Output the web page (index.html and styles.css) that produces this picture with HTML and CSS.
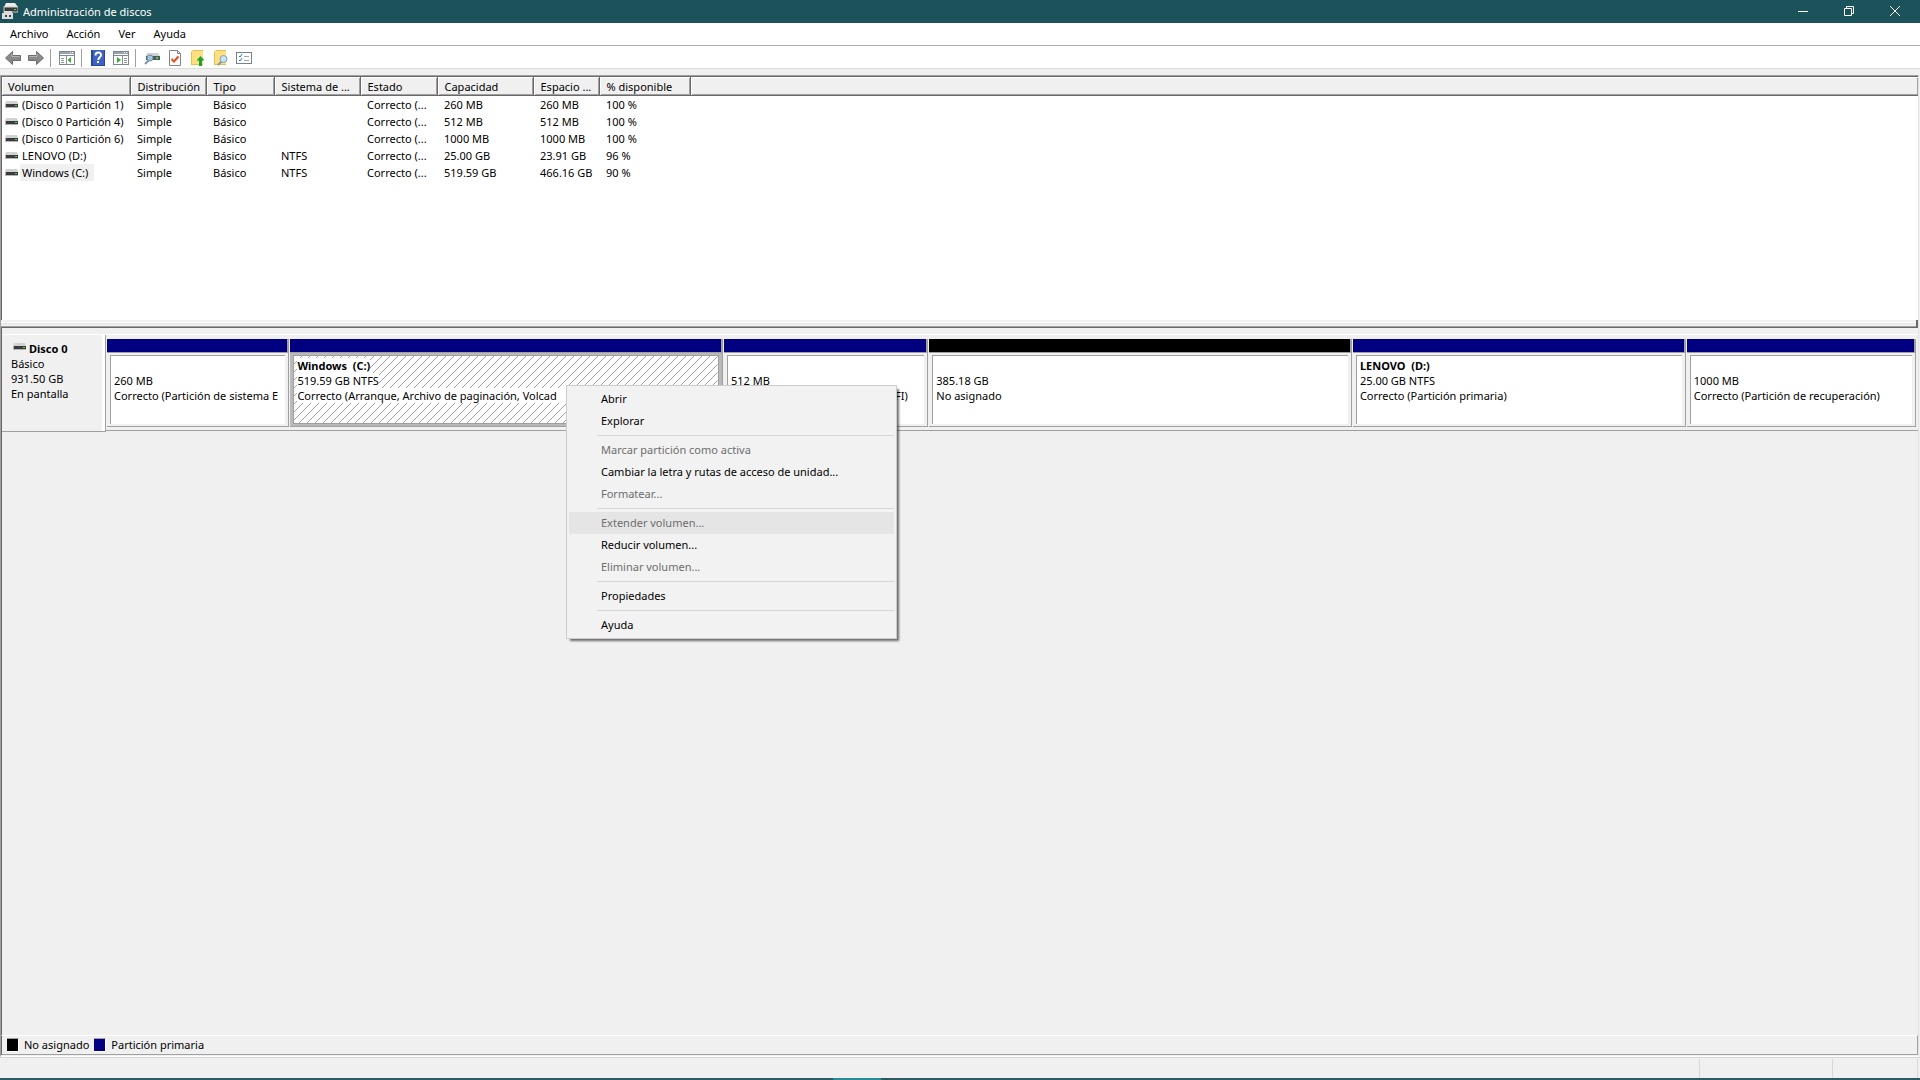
FILE: index.html
```html
<!DOCTYPE html>
<html lang="es">
<head>
<meta charset="utf-8">
<title>Administración de discos</title>
<link rel="stylesheet" href="styles.css">
</head>
<body>
<svg class="defs" width="0" height="0" aria-hidden="true">
  <defs>
    <symbol id="drive" viewBox="0 0 13 7">
      <path d="M1 0h11l1 3H0z" fill="#d2d2d6"/>
      <rect y="3" width="13" height="4" fill="#b4b4b8"/>
      <rect x="1" y="3" width="12" height="3" fill="#3c3c40"/>
      <rect x="10" y="4" width="2" height="1" fill="#3fe03f"/>
    </symbol>
    <symbol id="arrow" viewBox="0 0 16 14">
      <path d="M7.500.5v4h8v5h-8v4L.5 7z" fill="#8a8a8a" stroke="#6b6b6b"/>
      <path d="M7 2.500v3h7.500" fill="none" stroke="#b4b4b4"/>
    </symbol>
    <symbol id="panel" viewBox="0 0 16 14">
      <rect x=".5" y=".5" width="15" height="13" fill="#fff" stroke="#7e8791"/>
      <path d="M1 2h14" stroke="#9aa2ab" stroke-width="2"/>
      <path d="M11 1.500h1m1 0h1" stroke="#fff"/>
      <path d="M1 4.500h14" stroke="#7e8791"/>
    </symbol>
    <pattern id="hatch" width="8" height="8" patternUnits="userSpaceOnUse">
      <path d="M-1 9L9-1M-1 1L1-1M7 9L9 7" stroke="#a0a0a0" shape-rendering="crispEdges"/>
    </pattern>
  </defs>
</svg>
<div class="window">
  <header class="titlebar">
    <svg class="app-icon" width="16" height="16" viewBox="0 0 16 16" aria-hidden="true">
      <path d="M4 0h9l3 4H2z" fill="#ececec"/>
      <rect x="2" y="4" width="14" height="5" fill="#3a3a3c" stroke="#c8c8c8" stroke-width="1"/>
      <rect x="12" y="6" width="2" height="1" fill="#4be04b"/>
      <path d="M2 8h8v2h1v6H0v-6h2z" fill="#dcdcdc"/>
      <path d="M3 12h2v2H3zM7 12h2v2H7z" fill="#444"/>
    </svg>
    <h1>Administración de discos</h1>
    <div class="caption-buttons">
      <button type="button" aria-label="Minimizar"><svg width="10" height="10"><path d="M0 5.500h10" stroke="#fff"/></svg></button>
      <button type="button" aria-label="Restaurar"><svg width="10" height="10"><path d="M.5 2.500h7v7h-7zM2.500 2.500v-2h7v7h-2" fill="none" stroke="#fff"/></svg></button>
      <button type="button" aria-label="Cerrar"><svg width="10" height="10"><path d="M0 0l10 10M10 0L0 10" stroke="#fff"/></svg></button>
    </div>
  </header>

  <nav class="menubar">
    <button type="button">Archivo</button>
    <button type="button">Acción</button>
    <button type="button">Ver</button>
    <button type="button">Ayuda</button>
  </nav>

  <div class="toolbar" role="toolbar">
    <button type="button" aria-label="Atrás"><svg width="16" height="14"><use href="#arrow"/></svg></button>
    <button type="button" aria-label="Adelante"><svg class="flip" width="16" height="14"><use href="#arrow"/></svg></button>
    <span class="separator"></span>
    <button type="button" aria-label="Mostrar árbol"><svg width="16" height="14"><use href="#panel"/><path d="M7.500 5v8M2 7.500h3M2 9.500h3M2 11.500h3" stroke="#8b939b"/><path d="M12 6v6L8.500 9z" fill="#3aa832"/></svg></button>
    <span class="separator"></span>
    <button type="button" aria-label="Ayuda"><svg width="14" height="16" viewBox="0 0 14 16"><rect width="14" height="16" fill="#27469c"/><rect x="2" width="11" height="15" fill="#3f62c4"/><path d="M4.500 5.500C4.500 1.500 10 1.500 10 5c0 2.200-2.700 2.300-2.700 5" fill="none" stroke="#fff" stroke-width="2"/><rect x="6" y="11" width="2" height="2" fill="#fff"/></svg></button>
    <button type="button" aria-label="Panel de acciones"><svg width="16" height="14"><use href="#panel"/><path d="M9.500 5v8M11 7.500h3M11 9.500h3M11 11.500h3" stroke="#8b939b"/><path d="M4 6v6l4-3z" fill="#3aa832"/></svg></button>
    <span class="separator"></span>
    <button type="button" aria-label="Volver a examinar"><svg width="16" height="14" viewBox="0 0 16 14"><path d="M3 2h11l2 3H2z" fill="#d2d2d6"/><rect x="2" y="5" width="14" height="4" fill="#55555a"/><rect x="12" y="6" width="2" height="2" fill="#3fe03f"/><path d="M1 13l4-4" stroke="#7698b4" stroke-width="2"/><circle cx="6" cy="7" r="3" fill="#9cc8e4" stroke="#6b8ea8"/></svg></button>
    <button type="button" aria-label="Tareas"><svg width="12" height="16" viewBox="0 0 12 16"><path d="M.5.5h8l3 3v12H.5z" fill="#fafafa" stroke="#858585"/><path d="M8.500.5v3h3" fill="none" stroke="#858585"/><path d="M2.500 9l2.500 2.500 4.500-5" fill="none" stroke="#e0501e" stroke-width="2"/></svg></button>
    <button type="button" aria-label="Subir"><svg width="14" height="16" viewBox="0 0 14 16"><path d="M0 2l2-2h10v15H0z" fill="#e5bf50"/><path d="M1 1h11v13H1z" fill="#ffdf80"/><path d="M9.500 6l4 4.500h-2.500V16H8v-5.500H5.500z" fill="#19a52a"/></svg></button>
    <button type="button" aria-label="Buscar"><svg width="14" height="16" viewBox="0 0 14 16"><path d="M0 2l2-2h10v15H0z" fill="#e5bf50"/><path d="M1 1h11v13H1z" fill="#ffdf80"/><path d="M4 15l4-4" stroke="#7d98ab" stroke-width="2"/><circle cx="9.500" cy="9" r="3.500" fill="#c6e4f4" stroke="#84a0b0"/></svg></button>
    <button type="button" aria-label="Propiedades"><svg width="16" height="12" viewBox="0 0 16 12"><rect x=".5" y=".5" width="15" height="11" fill="#fff" stroke="#77818b"/><path d="M8 4.500h5M8 8.500h5" stroke="#a0a8b0"/><path d="M3 4l1 1 2-3M3 8l1 1 2-3" fill="none" stroke="#2f74c8"/></svg></button>
  </div>

  <main class="content">
    <section class="volumes">
      <table>
        <colgroup><col class="c-volume"><col class="c-layout"><col class="c-type"><col class="c-fs"><col class="c-state"><col class="c-capacity"><col class="c-free"><col class="c-percent"><col></colgroup>
        <thead><tr><th>Volumen</th><th>Distribución</th><th>Tipo</th><th>Sistema de ...</th><th>Estado</th><th>Capacidad</th><th>Espacio ...</th><th>% disponible</th><th></th></tr></thead>
        <tbody>
          <tr><td><svg width="13" height="7"><use href="#drive"/></svg><span>(Disco 0 Partición 1)</span></td><td>Simple</td><td>Básico</td><td></td><td>Correcto (...</td><td>260 MB</td><td>260 MB</td><td>100 %</td><td></td></tr>
          <tr><td><svg width="13" height="7"><use href="#drive"/></svg><span>(Disco 0 Partición 4)</span></td><td>Simple</td><td>Básico</td><td></td><td>Correcto (...</td><td>512 MB</td><td>512 MB</td><td>100 %</td><td></td></tr>
          <tr><td><svg width="13" height="7"><use href="#drive"/></svg><span>(Disco 0 Partición 6)</span></td><td>Simple</td><td>Básico</td><td></td><td>Correcto (...</td><td>1000 MB</td><td>1000 MB</td><td>100 %</td><td></td></tr>
          <tr><td><svg width="13" height="7"><use href="#drive"/></svg><span>LENOVO (D:)</span></td><td>Simple</td><td>Básico</td><td>NTFS</td><td>Correcto (...</td><td>25.00 GB</td><td>23.91 GB</td><td>96 %</td><td></td></tr>
          <tr><td><svg width="13" height="7"><use href="#drive"/></svg><span class="selected">Windows (C:)</span></td><td>Simple</td><td>Básico</td><td>NTFS</td><td>Correcto (...</td><td>519.59 GB</td><td>466.16 GB</td><td>90 %</td><td></td></tr>
        </tbody>
      </table>
    </section>
    <div class="splitter"></div>
    <section class="disks">
      <div class="disk">
        <div class="disk-label">
          <h2><svg width="13" height="7"><use href="#drive"/></svg>Disco 0</h2>
          <p>Básico</p>
          <p>931.50 GB</p>
          <p>En pantalla</p>
        </div>
        <div class="partitions">
          <article class="partition p-system"><div class="stripe"></div><div class="body"><div class="info"><h3></h3><p>260 MB</p><p>Correcto (Partición de sistema E</p></div></div></article>
          <article class="partition p-windows active"><div class="stripe"></div><div class="body"><div class="info"><svg class="hatch" aria-hidden="true"><rect width="100%" height="100%" fill="url(#hatch)"/></svg><h3><span>Windows&nbsp; (C:)</span></h3><p><span>519.59 GB NTFS</span></p><p><span class="long">Correcto (Arranque, Archivo de paginación, Volcad</span></p></div></div></article>
          <article class="partition p-efi"><div class="stripe"></div><div class="body"><div class="info"><h3></h3><p>512 MB</p><p>Correcto (Partición de sistema EFI)</p></div></div></article>
          <article class="partition p-free unallocated"><div class="stripe"></div><div class="body"><div class="info"><h3></h3><p>385.18 GB</p><p>No asignado</p></div></div></article>
          <article class="partition p-lenovo"><div class="stripe"></div><div class="body"><div class="info"><h3>LENOVO&nbsp; (D:)</h3><p>25.00 GB NTFS</p><p>Correcto (Partición primaria)</p></div></div></article>
          <article class="partition p-recovery"><div class="stripe"></div><div class="body"><div class="info"><h3></h3><p>1000 MB</p><p>Correcto (Partición de recuperación)</p></div></div></article>
        </div>
      </div>
      <div class="context-menu" role="menu">
        <button type="button" role="menuitem">Abrir</button>
        <button type="button" role="menuitem">Explorar</button>
        <hr>
        <button type="button" role="menuitem" disabled>Marcar partición como activa</button>
        <button type="button" role="menuitem">Cambiar la letra y rutas de acceso de unidad...</button>
        <button type="button" role="menuitem" disabled>Formatear...</button>
        <hr>
        <button type="button" role="menuitem" class="hover" disabled>Extender volumen...</button>
        <button type="button" role="menuitem">Reducir volumen...</button>
        <button type="button" role="menuitem" disabled>Eliminar volumen...</button>
        <hr>
        <button type="button" role="menuitem">Propiedades</button>
        <hr>
        <button type="button" role="menuitem">Ayuda</button>
      </div>
    </section>
    <footer class="legend">
      <span class="swatch black"></span><span>No asignado</span>
      <span class="swatch blue"></span><span>Partición primaria</span>
    </footer>
  </main>
  <div class="statusbar"><span></span><span></span><span></span></div>
  <div class="taskbar"></div>
</div>
</body>
</html>
```
FILE: styles.css
```css
* { box-sizing: border-box; }

body {
  margin: 0;
  background: #f0f0f0;
  color: #000;
  font: 11px/15px "Noto Sans", "Open Sans", sans-serif;
}

h1, h2, h3, p { margin: 0; font-size: inherit; }

button {
  border: 0;
  padding: 0;
  background: none;
  color: inherit;
  font: inherit;
}

svg { display: block; flex: none; }
.defs { position: absolute; }

.window { display: flex; flex-direction: column; height: 100vh; }

.titlebar {
  display: flex;
  align-items: center;
  height: 23px;
  padding: 0 2px 1px;
  background: #1c535b;
  color: #fff;
}
.titlebar h1 { margin-left: 5px; font-weight: 400; }
.caption-buttons { display: flex; margin-left: auto; }
.caption-buttons button {
  display: flex;
  align-items: center;
  justify-content: center;
  width: 46px;
  height: 20px;
}

.menubar {
  display: flex;
  gap: 18px;
  height: 23px;
  padding: 0 10px 2px;
  border-bottom: 1px solid #b0b0b4;
  background: #fff;
}

.toolbar {
  display: flex;
  align-items: center;
  height: 23px;
  padding: 2px 1px 0;
  border-bottom: 1px solid #dcdcdc;
  background: #fff;
}
.toolbar button { display: flex; justify-content: center; width: 23px; }
.flip { transform: scaleX(-1); }
.separator { width: 1px; height: 18px; margin: 0 4px 0 3px; background: #a0a0a0; }

.content {
  display: flex;
  flex: 1;
  flex-direction: column;
  min-height: 0;
  margin: 6px 1px 0 0;
  padding-bottom: 1px;
  border: 1px solid #a0a0a0;
  border-right-color: #e3e3e3;
  border-bottom-color: #fff;
}

.volumes {
  flex: none;
  height: 244px;
  border-top: 1px solid #696969;
  border-left: 1px solid #696969;
  background: #fff;
}
.volumes table { width: 100%; border-collapse: collapse; table-layout: fixed; }
.volumes th {
  height: 18px;
  padding: 1px 0 0 7px;
  border-right: 1px solid #696969;
  border-bottom: 1px solid #696969;
  background: #f0f0f0;
  box-shadow: inset 1px 1px #fff, inset -1px -1px #a0a0a0;
  font-weight: 400;
  text-align: left;
  white-space: nowrap;
}
.volumes th:first-child { padding-left: 6px; }
.volumes th:last-child { border-right: 0; }
.volumes td { height: 17px; padding: 0 0 0 7px; line-height: 17px; white-space: nowrap; }
.volumes td:first-child { display: flex; align-items: center; padding: 0 3px; }
.volumes td:first-child span { margin-left: 2px; padding: 0 6px 0 2px; }
.volumes td .selected { background: #f0f0f0; }
.c-volume { width: 128px; }
.c-layout { width: 76px; }
.c-type { width: 68px; }
.c-fs { width: 86px; }
.c-state { width: 77px; }
.c-capacity { width: 96px; }
.c-free { width: 66px; }
.c-percent { width: 91px; }

.splitter {
  flex: none;
  height: 8px;
  border-right: 2px solid #696969;
  border-bottom: 1px solid #696969;
  background: linear-gradient(#f0f0f0 2px, #fff 2px 3px, #e3e3e3 3px 4px, #f0f0f0 4px 6px, #a0a0a0 6px);
}

.disks {
  position: relative;
  flex: 1;
  border-left: 1px solid #696969;
  padding-top: 6px;
}

.disk { display: flex; border-top: 1px solid #fff; }
.disk-label {
  flex: none;
  width: 104px;
  height: 97px;
  padding: 6px 9px;
  border-right: 1px solid #a0a0a0;
  border-bottom: 1px solid #a0a0a0;
  box-shadow: inset -3px 0 #fff;
}
.disk-label h2 { display: flex; gap: 3px; padding-left: 2px; line-height: 15px; }
.disk-label h2 svg { margin-top: 2px; }

.partitions {
  display: flex;
  flex: 1;
  gap: 1px;
  min-width: 0;
  height: 96px;
  padding: 4px 2px 3px 1px;
  border-bottom: 1px solid #a0a0a0;
}
.partition {
  display: flex;
  flex-direction: column;
  min-width: 0;
  border-right: 1px solid #a0a0a0;
  border-bottom: 1px solid #a0a0a0;
}
.p-system { flex: 182 1 0; }
.p-windows { flex: 433 1 0; }
.p-efi { flex: 204 1 0; }
.p-free { flex: 423 1 0; }
.p-lenovo { flex: 333 1 0; }
.p-recovery { flex: 229 1 0; }
.stripe { height: 14px; border-right: 1px solid #a0a0a0; border-bottom: 1px solid #a0a0a0; background: #000080; }
.unallocated .stripe { background: #000; }
.body { flex: 1; padding: 2px 3px; }
.info {
  position: relative;
  height: 100%;
  padding: 2px 3px;
  overflow: hidden;
  border-top: 1px solid #a0a0a0;
  border-left: 1px solid #a0a0a0;
  background: #fff;
  white-space: nowrap;
}
.info h3 { min-height: 15px; }
.active .body { background: #b9b9b9; }
.active .info { border: 1px solid #a0a0a0; }
.hatch { position: absolute; inset: 0; width: 100%; height: 100%; }
.active h3, .active p { position: relative; }
.active .info span { display: inline-block; background: #fff; }
.active .info .long { padding-right: 16px; }

.context-menu {
  position: absolute;
  top: 57px;
  left: 564px;
  width: 331px;
  padding: 2px;
  border: 1px solid #ccc;
  background: #f2f2f2;
  box-shadow: 3px 3px 2px -1px rgba(0, 0, 0, .55);
}
.context-menu button { display: block; width: 100%; height: 22px; padding: 0 0 2px 32px; text-align: left; }
.context-menu button:disabled { color: #6d6d6d; }
.context-menu .hover { background: #e5e5e5; }
.context-menu hr { margin: 3px 0 3px 28px; border: 0; border-top: 1px solid #d7d7d7; }

.legend {
  display: flex;
  flex: none;
  align-items: center;
  gap: 5px;
  height: 20px;
  padding: 0 0 1px 5px;
  border: 1px solid #a0a0a0;
  border-top-color: #fff;
  border-left-color: #696969;
}
.swatch { width: 12px; height: 14px; border: 1px solid #fff; border-top-color: #a0a0a0; border-left: 0; }
.black { background: #000; }
.blue { background: #000080; }

.statusbar {
  display: flex;
  flex: none;
  justify-content: flex-end;
  height: 21px;
  padding: 1px 2px 0 0;
  border-top: 1px solid #d7d7d7;
}
.statusbar span { width: 133px; border-left: 1px solid #d7d7d7; }
.statusbar span:nth-child(2) { width: 85px; }
.statusbar span:last-child { width: 1px; }

.taskbar {
  flex: none;
  height: 2px;
  background: linear-gradient(90deg, #2c5b64 43.4%, #2a8b98 43.4% 45.9%, #2c5b64 45.9%);
}
```
